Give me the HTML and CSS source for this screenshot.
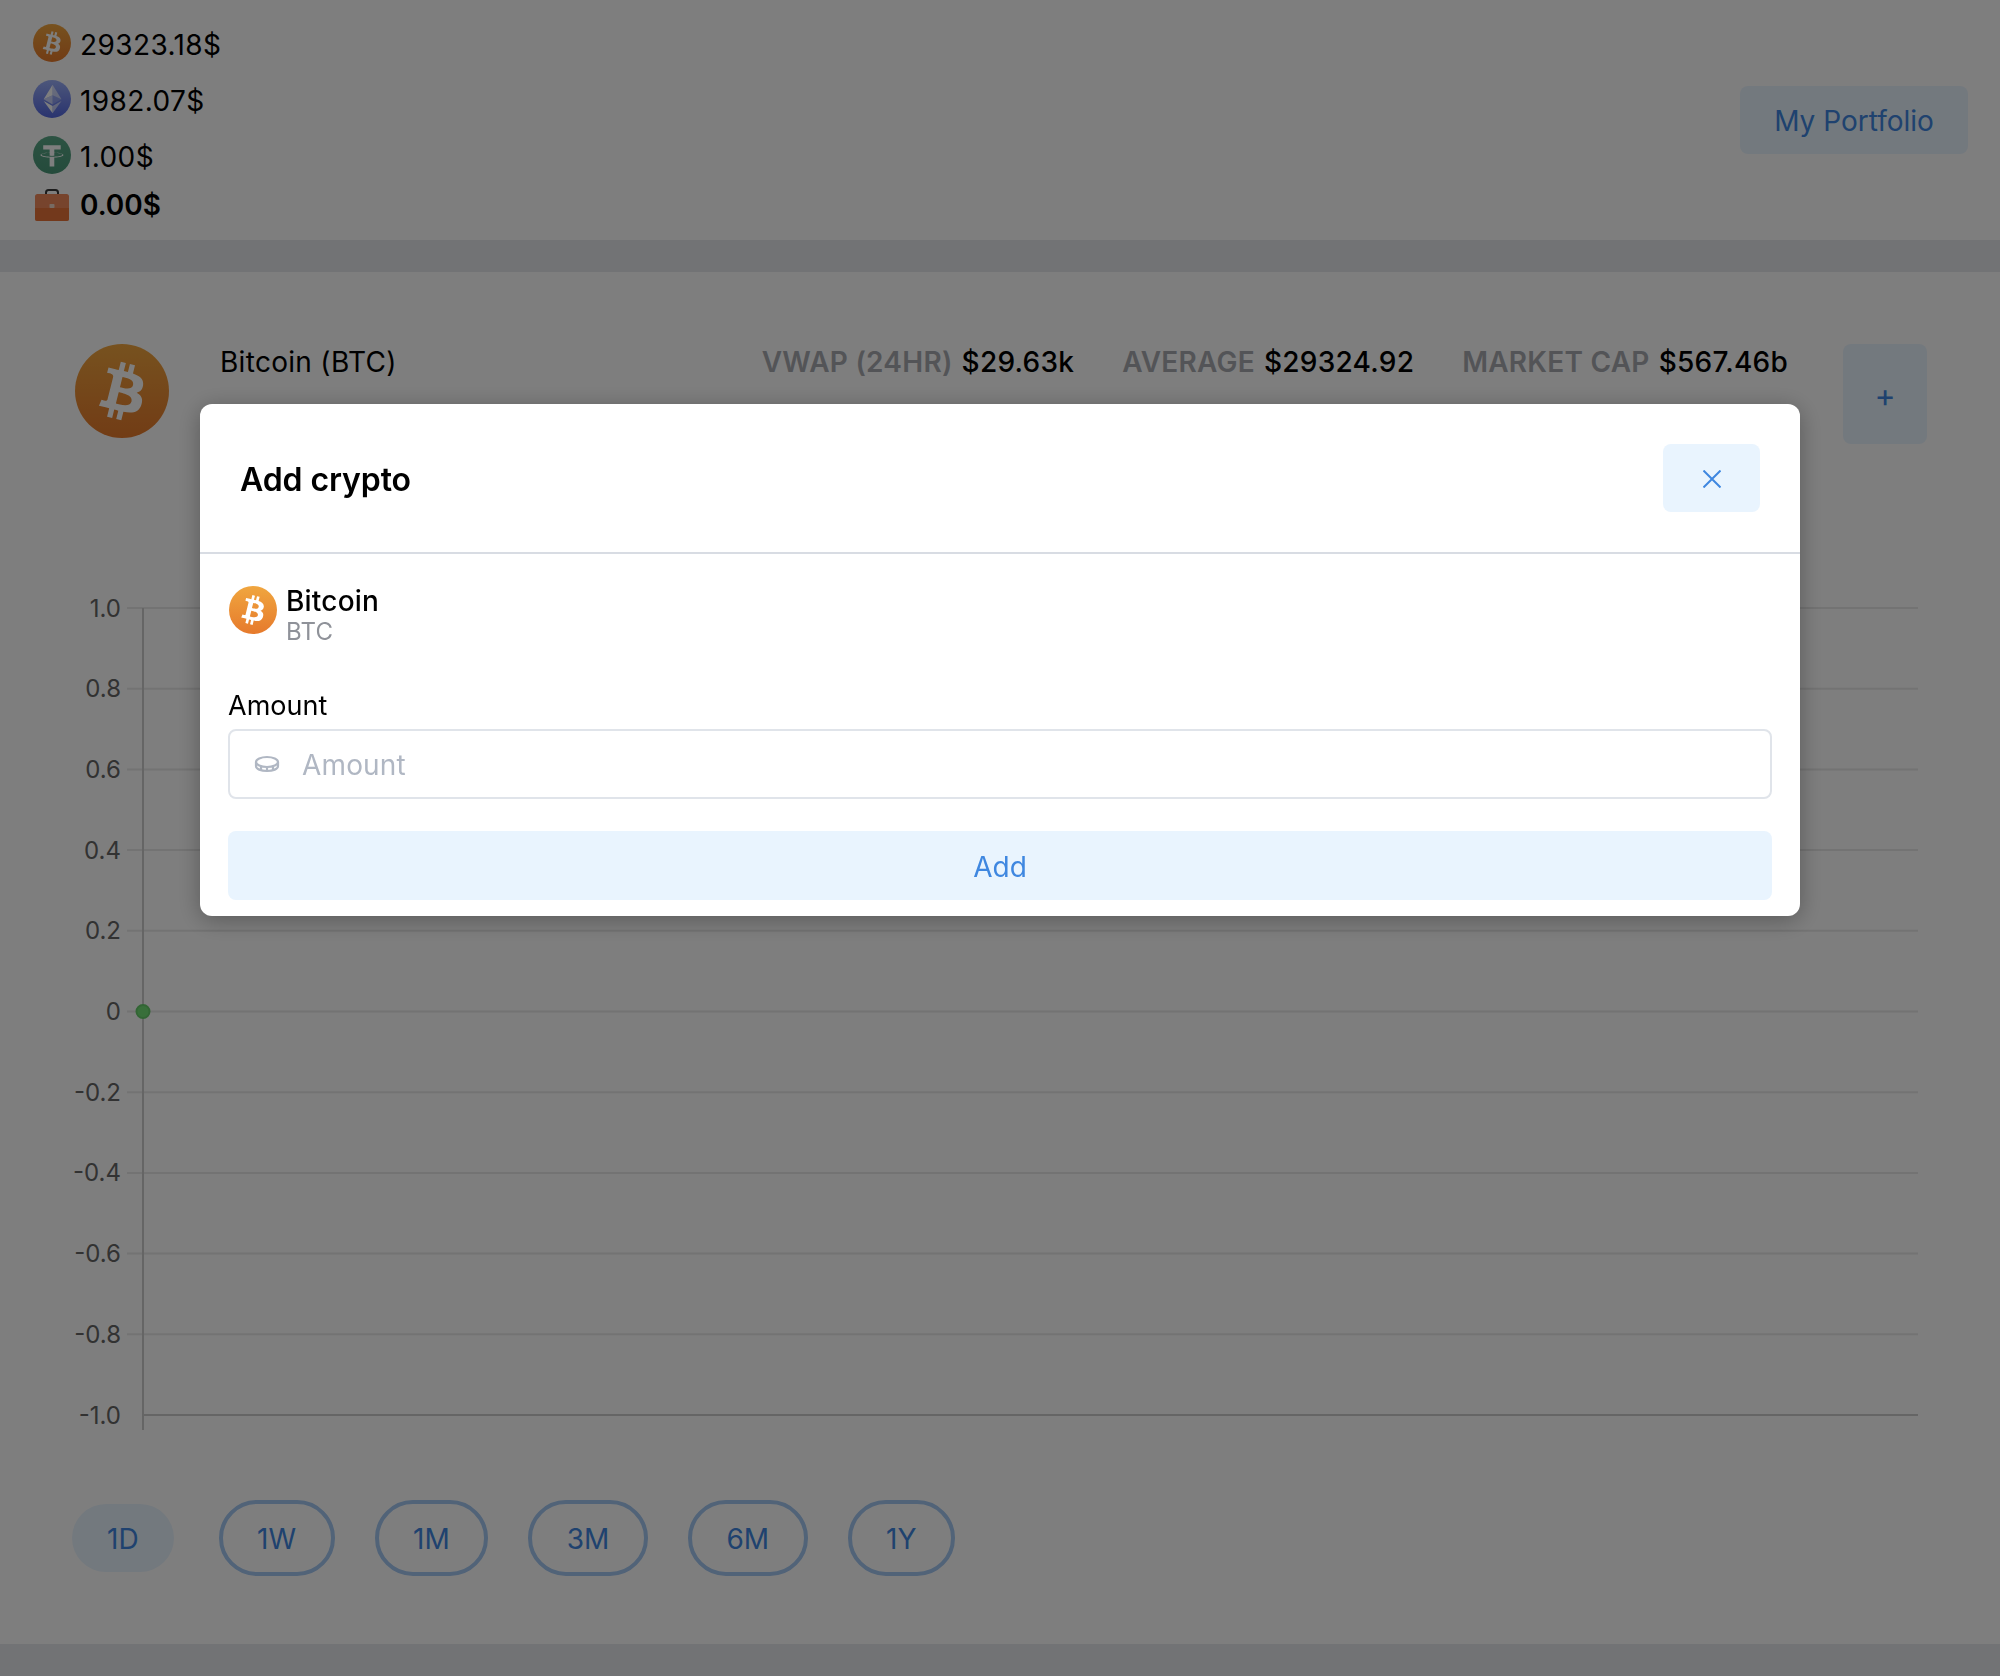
FILE: index.html
```html
<!DOCTYPE html>
<html lang="en">
<head>
<meta charset="utf-8">
<title>Crypto</title>
<link rel="stylesheet" href="styles.css">
</head>
<body>
<svg class="defs" width="0" height="0" aria-hidden="true">
  <defs>
    <linearGradient id="g-btc" x1="0" y1="0" x2="0" y2="1"><stop offset="0" stop-color="#f0a63f"/><stop offset="1" stop-color="#e67a2c"/></linearGradient>
    <linearGradient id="g-eth" x1="0" y1="0" x2="0" y2="1"><stop offset="0" stop-color="#9cb0f8"/><stop offset="1" stop-color="#5468e0"/></linearGradient>
    <linearGradient id="g-usdt" x1="0" y1="0" x2="0" y2="1"><stop offset="0" stop-color="#5aa888"/><stop offset="1" stop-color="#4a9878"/></linearGradient>
    <symbol id="btc" viewBox="0 0 32 32">
      <circle cx="16" cy="16" r="16" fill="url(#g-btc)"/>
      <path fill="#fff" fill-rule="nonzero" d="M23.189 14.02c.314-2.096-1.283-3.223-3.465-3.975l.708-2.84-1.728-.43-.69 2.765c-.454-.114-.92-.22-1.385-.326l.695-2.783L15.596 6l-.708 2.839c-.376-.086-.746-.17-1.104-.26l.002-.009-2.384-.595-.46 1.846s1.283.294 1.256.312c.7.175.826.638.805 1.006l-.806 3.235c.048.012.11.03.18.057l-.183-.045-1.13 4.532c-.086.212-.303.531-.793.41.018.025-1.256-.313-1.256-.313l-.858 1.978 2.25.561c.418.105.828.215 1.231.318l-.715 2.872 1.727.43.708-2.84c.472.127.93.245 1.378.357l-.706 2.828 1.728.43.715-2.866c2.948.558 5.164.333 6.097-2.333.752-2.146-.037-3.385-1.588-4.192 1.13-.26 1.98-1.003 2.207-2.538zm-3.95 5.538c-.533 2.147-4.148.986-5.32.695l.95-3.805c1.172.293 4.929.872 4.37 3.11zm.535-5.569c-.487 1.953-3.495.96-4.47.717l.86-3.45c.975.243 4.118.696 3.61 2.733z"/>
    </symbol>
    <symbol id="eth" viewBox="0 0 32 32">
      <circle cx="16" cy="16" r="16" fill="url(#g-eth)"/>
      <g fill="#fff" fill-rule="nonzero">
        <path fill-opacity=".6" d="M16.498 4v8.87l7.497 3.35z"/>
        <path d="M16.498 4L9 16.22l7.498-3.35z"/>
        <path fill-opacity=".6" d="M16.498 21.968v6.027L24 17.616z"/>
        <path d="M16.498 27.995v-6.028L9 17.616z"/>
        <path fill-opacity=".2" d="M16.498 20.573l7.497-4.353-7.497-3.348z"/>
        <path fill-opacity=".6" d="M9 16.22l7.498 4.353v-7.701z"/>
      </g>
    </symbol>
    <symbol id="usdt" viewBox="0 0 32 32">
      <circle cx="16" cy="16" r="16" fill="url(#g-usdt)"/>
      <path fill="#fff" d="M17.922 17.383v-.002c-.11.008-.677.042-1.942.042-1.01 0-1.721-.03-1.971-.042v.003c-3.888-.171-6.79-.848-6.79-1.658 0-.809 2.902-1.486 6.79-1.66v2.644c.254.018.982.061 1.988.061 1.207 0 1.812-.05 1.925-.06v-2.643c3.88.173 6.775.85 6.775 1.658 0 .81-2.895 1.485-6.775 1.657m0-3.59v-2.366h5.414V7.819H8.595v3.608h5.414v2.365c-4.4.202-7.709 1.074-7.709 2.118 0 1.044 3.309 1.915 7.709 2.118v7.582h3.913v-7.584c4.393-.202 7.694-1.073 7.694-2.116 0-1.043-3.301-1.914-7.694-2.117"/>
    </symbol>
  </defs>
</svg>

<header class="topbar">
  <ul class="prices">
    <li class="price"><svg class="price-icon"><use href="#btc"/></svg><span>29323.18$</span></li>
    <li class="price"><svg class="price-icon"><use href="#eth"/></svg><span>1982.07$</span></li>
    <li class="price"><svg class="price-icon"><use href="#usdt"/></svg><span>1.00$</span></li>
    <li class="price price-total">
      <svg class="price-icon bag" viewBox="0 0 38 34">
        <path d="M13 9V5.500Q13 3 15.500 3h7Q25 3 25 5.500V9" fill="none" stroke="#3a3a3a" stroke-width="2"/>
        <rect x="2" y="7" width="34" height="27" rx="2.500" fill="#f08a5c"/>
        <path d="M2 21h34v10.500a2.500 2.500 0 0 1-2.500 2.500h-29A2.500 2.500 0 0 1 2 31.500z" fill="#e8743a"/>
        <rect x="16.500" y="17" width="5" height="4" rx=".8" fill="#f0d8c8"/>
      </svg>
      <span>0.00$</span>
    </li>
  </ul>
  <button class="btn portfolio">My Portfolio</button>
</header>

<main class="panel">
  <section class="coin-head">
    <svg class="coin-logo"><use href="#btc"/></svg>
    <h1 class="coin-name">Bitcoin (BTC)</h1>
    <dl class="stats">
      <div class="stat"><dt>VWAP (24HR)</dt><dd>$29.63k</dd></div>
      <div class="stat"><dt>AVERAGE</dt><dd>$29324.92</dd></div>
      <div class="stat"><dt>MARKET CAP</dt><dd>$567.46b</dd></div>
    </dl>
    <button class="btn plus">+</button>
  </section>

  <svg class="chart" viewBox="0 0 2000 860" width="2000" height="860">
    <g class="grid">
      <line x1="127" x2="1918" y1="18" y2="18"/>
      <line x1="127" x2="1918" y1="98.700" y2="98.700"/>
      <line x1="127" x2="1918" y1="179.400" y2="179.400"/>
      <line x1="127" x2="1918" y1="260.100" y2="260.100"/>
      <line x1="127" x2="1918" y1="340.800" y2="340.800"/>
      <line x1="127" x2="1918" y1="421.500" y2="421.500"/>
      <line x1="127" x2="1918" y1="502.200" y2="502.200"/>
      <line x1="127" x2="1918" y1="582.900" y2="582.900"/>
      <line x1="127" x2="1918" y1="663.600" y2="663.600"/>
      <line x1="127" x2="1918" y1="744.300" y2="744.300"/>
    </g>
    <line class="axis" x1="143" x2="143" y1="18" y2="840"/>
    <line class="axis" x1="143" x2="1918" y1="825" y2="825"/>
    <g class="ticks">
      <text x="121" y="26.500">1.0</text>
      <text x="121" y="107.200">0.8</text>
      <text x="121" y="187.900">0.6</text>
      <text x="121" y="268.600">0.4</text>
      <text x="121" y="349.300">0.2</text>
      <text x="121" y="430">0</text>
      <text x="121" y="510.700">-0.2</text>
      <text x="121" y="591.400">-0.4</text>
      <text x="121" y="672.100">-0.6</text>
      <text x="121" y="752.800">-0.8</text>
      <text x="121" y="833.500">-1.0</text>
    </g>
    <circle class="dot" cx="143" cy="421.500" r="6.500"/>
  </svg>

  <nav class="ranges">
    <button class="range active">1D</button>
    <button class="range">1W</button>
    <button class="range">1M</button>
    <button class="range">3M</button>
    <button class="range">6M</button>
    <button class="range">1Y</button>
  </nav>
</main>

<div class="overlay">
  <div class="modal">
    <div class="modal-head">
      <h2 class="modal-title">Add crypto</h2>
      <button class="btn close" aria-label="Close">
        <svg viewBox="0 0 18 18" width="18" height="18"><path d="M.5.5l17 17M17.500.5l-17 17" fill="none" stroke="currentColor" stroke-width="2"/></svg>
      </button>
    </div>
    <div class="modal-body">
      <div class="asset">
        <svg class="asset-icon"><use href="#btc"/></svg>
        <div class="asset-text">
          <div class="asset-name">Bitcoin</div>
          <div class="asset-symbol">BTC</div>
        </div>
      </div>
      <label class="field-label" for="amount">Amount</label>
      <div class="input-wrap">
        <svg class="input-icon" viewBox="0 0 26 18" width="26" height="18">
          <g fill="none" stroke="currentColor" stroke-width="2.200">
            <ellipse cx="13" cy="7" rx="11" ry="5"/>
            <path d="M2 7v4c0 3 5 5 11 5s11-2 11-5V7"/>
            <path d="M7 12v3M13 13v3M19 12v3"/>
          </g>
        </svg>
        <input class="input" id="amount" placeholder="Amount">
      </div>
      <button class="btn submit">Add</button>
    </div>
  </div>
</div>
</body>
</html>
```
FILE: styles.css
```css
* { box-sizing: border-box; }
html, body { margin: 0; padding: 0; }
body {
  width: 2000px;
  height: 1676px;
  overflow: hidden;
  background: #e6e9ec;
  font-family: Inter, "Liberation Sans", sans-serif;
  font-size: 28px;
  color: #000;
  display: flex;
  flex-direction: column;
}
.defs { position: absolute; }
button { font: inherit; border: 0; cursor: pointer; }

.topbar {
  height: 240px;
  flex: none;
  background: #fff;
  padding: 15px 32px 0 33px;
  display: flex;
  justify-content: space-between;
  align-items: flex-start;
}
.prices { list-style: none; margin: 0; padding: 0; }
.price { display: flex; align-items: center; gap: 9px; height: 56px; letter-spacing: .4px; }
.price span { padding-top: 3px; }
.price-icon { width: 38px; height: 38px; flex: none; }
.price-total { height: 42px; font-weight: 600; letter-spacing: 0; }
.price-total span { padding-top: 2px; }
.bag { height: 34px; }

.btn { background: #e9f4fe; color: #3f87e0; border-radius: 8px; padding: 2px 0 0; }
.portfolio { width: 228px; height: 68px; margin-top: 71px; }

.panel {
  flex: 1;
  margin: 32px 0;
  background: #fff;
  padding-top: 72px;
  display: flex;
  flex-direction: column;
}
.coin-head { height: 100px; flex: none; padding: 0 73px 0 75px; display: flex; align-items: flex-start; }
.coin-logo { width: 94px; height: 94px; flex: none; }
.coin-name { margin: 0 0 0 51px; font-size: 28px; font-weight: 400; line-height: 36px; letter-spacing: .3px; }
.stats { margin: 0 55px 0 auto; display: flex; gap: 48px; line-height: 36px; letter-spacing: .25px; }
.stat { display: flex; gap: 9px; }
.stat dt { color: #a9abb0; font-weight: 600; }
.stat dd { margin: 0; font-weight: 500; }
.plus { width: 84px; height: 100px; font-size: 32px; }

.chart { display: block; flex: none; margin-top: 146px; }
.grid line { stroke: #e8e8e8; stroke-width: 2; }
.axis { stroke: #cccccc; stroke-width: 2; }
.ticks text { font-size: 24px; fill: #666; text-anchor: end; }
.dot { fill: #72e076; stroke: #66cc6a; stroke-width: 2; }

.ranges { margin-top: 50px; padding-left: 72px; display: flex; align-items: center; gap: 40px; }
.range {
  height: 76px;
  padding: 2px 34.500px 0;
  background: transparent;
  color: #3f87e0;
  border: 4px solid #a4c8f2;
  border-radius: 38px;
}
.range.active { height: 68px; padding: 2px 35px 0; margin-right: 5px; background: #e9f4fe; border: 0; border-radius: 34px; }

.overlay {
  position: fixed;
  inset: 0;
  background: rgba(0, 0, 0, .505);
  display: flex;
  justify-content: center;
  align-items: flex-start;
  padding-top: 404px;
}
.modal {
  width: 1600px;
  height: 512px;
  background: #fff;
  border-radius: 12px;
  box-shadow: 0 4px 24px rgba(0, 0, 0, .3);
}
.modal-head {
  height: 150px;
  padding: 40px 40px 0;
  border-bottom: 2px solid #d8dce3;
  display: flex;
  justify-content: space-between;
  align-items: flex-start;
}
.modal-title { margin: 0; padding-top: 16px; font-size: 32px; line-height: 40px; font-weight: 600; letter-spacing: -.1px; }
.close { width: 97px; height: 68px; display: flex; align-items: center; justify-content: center; }
.modal-body { padding: 32px 28px 0; }
.asset { display: flex; gap: 9px; height: 71px; }
.asset-icon { width: 48px; height: 48px; flex: none; margin-left: 1px; }
.asset-name { font-size: 28px; line-height: 32px; font-weight: 500; margin-top: -1px; letter-spacing: .2px; }
.asset-symbol { font-size: 24px; line-height: 30px; color: #8f9299; letter-spacing: .2px; }
.field-label { display: block; font-size: 27px; line-height: 36px; margin-top: 31px; }
.input-wrap { position: relative; margin-top: 5px; }
.input-icon { position: absolute; left: 26px; top: 26px; color: #b0b7c3; }
.input {
  display: block;
  width: 100%;
  height: 70px;
  padding: 2px 0 0 72px;
  border: 2px solid #e0e4ea;
  border-radius: 8px;
  font: inherit;
  letter-spacing: .15px;
  outline: 0;
}
.input::placeholder { color: #b0b7c3; opacity: 1; }
.submit { display: block; width: 100%; height: 69px; margin-top: 32px; }
```
